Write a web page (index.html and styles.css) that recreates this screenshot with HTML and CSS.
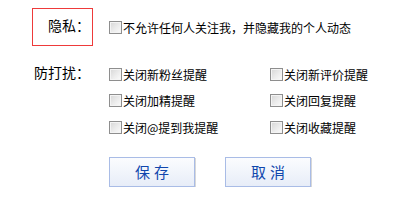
FILE: index.html
```html
<!DOCTYPE html>
<html>
 <head>
  <meta charset="utf-8">
  <title>隐私设置</title>
  <link rel="stylesheet" href="styles.css">
 </head>
 <body>
  <div class="setting">
    <div class="row privacy">
      <div class="label hl">隐私：</div>
      <div class="opts">
        <label class="opt"><input type="checkbox">不允许任何人关注我，并隐藏我的个人动态</label>
      </div>
    </div>
    <div class="row quiet">
      <div class="label">防打扰：</div>
      <div class="opts grid">
        <label class="opt"><input type="checkbox">关闭新粉丝提醒</label>
        <label class="opt"><input type="checkbox">关闭新评价提醒</label>
        <label class="opt"><input type="checkbox">关闭加精提醒</label>
        <label class="opt"><input type="checkbox">关闭回复提醒</label>
        <label class="opt"><input type="checkbox">关闭@提到我提醒</label>
        <label class="opt"><input type="checkbox">关闭收藏提醒</label>
      </div>
    </div>
    <div class="btns">
      <button class="btn">保存</button>
      <button class="btn">取消</button>
    </div>
  </div>
 </body>
</html>
```

FILE: styles.css
```css
* {
  margin: 0;
  padding: 0;
  box-sizing: border-box;
}
body {
  font-family: "Noto Sans CJK SC", "Liberation Sans", sans-serif;
  font-size: 12px;
  color: #000;
  background: #fff;
}
.setting {
  padding: 8px 0 0 32px;
}
.row {
  display: flex;
}
.label {
  flex: none;
  width: 61px;
  padding-right: 2px;
  text-align: right;
  font-size: 14px;
  white-space: nowrap;
  border: 1px solid transparent;
}
.label.hl {
  height: 38px;
  line-height: 33px;
  border-color: #ee3a3a;
}
.opts {
  margin-left: 16px;
}
.privacy .opts {
  padding-top: 13px;
}
.quiet {
  margin-top: 15px;
}
.quiet .label {
  line-height: 20px;
}
.grid {
  display: grid;
  grid-template-columns: 161px auto;
  grid-auto-rows: 26.5px;
}
.opt {
  display: flex;
  align-items: center;
  height: 13px;
  line-height: 13px;
  white-space: nowrap;
}
.grid .opt {
  height: 26.5px;
}
.opt input {
  appearance: none;
  -webkit-appearance: none;
  width: 13px;
  height: 13px;
  margin-right: 1px;
  border: 1px solid #8e8e8e;
  background: linear-gradient(135deg, #d6d6d6 0%, #ececec 55%, #fbfbfb 100%);
  box-shadow: inset 0 0 0 1px #f4f4f4;
  flex: none;
}
.btns {
  display: flex;
  gap: 30px;
  margin: 16px 0 0 77px;
}
.btn {
  width: 86px;
  height: 30px;
  font-family: "Noto Sans CJK SC", sans-serif;
  font-size: 15px;
  letter-spacing: 4px;
  text-indent: 4px;
  color: #1046ad;
  border: 1px solid #a9bce6;
  background: linear-gradient(#fbfcfe, #e7edf8);
  box-shadow: 1px 1px 0 #d8d8d8;
}
```
